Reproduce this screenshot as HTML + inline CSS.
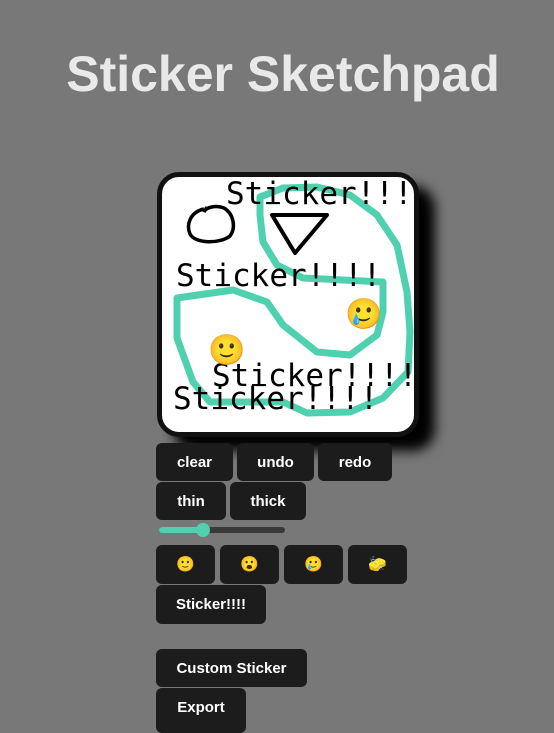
<!DOCTYPE html>
<html><head><style>
body{margin:0;background:#787878;width:554px;height:725px;overflow:hidden;position:relative;font-family:"Liberation Sans",sans-serif}
h1{position:absolute;left:0;width:566px;top:45px;margin:0;text-align:center;font-size:50px;font-weight:bold;color:#e9e9e9}
#cv{position:absolute;left:157px;top:172px;width:252px;height:255px;border:5px solid #111;border-radius:22px;background:#fff;overflow:hidden;box-shadow:16px 14px 12px #000}
#cv svg{position:absolute;left:-162px;top:-177px}
.b{position:absolute;background:#1c1c1c;color:#fff;border-radius:6px;height:38px;line-height:40px;text-align:center;font-size:15px;font-weight:bold}
.s{position:absolute;left:159px;top:527px;width:126px;height:6px;border-radius:3px;background:#3a3a3a}
.s i{position:absolute;left:0;top:0;width:44px;height:6px;background:#4fd1b0;border-radius:3px}
.s b{position:absolute;left:37px;top:-4px;width:14px;height:14px;border-radius:50%;background:#4fd1b0}
</style></head><body>
<h1>Sticker Sketchpad</h1>
<div id="cv"><svg width="554" height="725" viewBox="0 0 554 725">
<path d="M260,197 L283,188 L317,187 L350,195 L377,215 L397,245 L407,292 L410,332 L408,372 L383,398 L350,412 L307,413 L283,402 L210,402 L193,382 L177,338 L177,298 L233,290 L267,302 L283,325 L317,352 L350,355 L377,335 L383,312 L383,282 L343,280 L303,278 L277,265 L263,242 L260,215 Z" fill="none" stroke="#4fd1b0" stroke-width="7" stroke-linejoin="round"/>
<path d="M204,209 C190,212 186,225 190,234 C195,244 220,244 230,236 C236,228 234,214 224,208 C216,205 206,207 204,212 L207,207" fill="none" stroke="#000" stroke-width="3.5"/>
<path d="M272,215 L327,215 L295,253 Z" fill="none" stroke="#000" stroke-width="4" stroke-linejoin="round"/>
<g font-family="DejaVu Sans Mono,monospace" font-size="31" fill="#000">
<text x="226" y="204">Sticker!!!</text>
<text x="176" y="286">Sticker!!!!</text>
<text x="212" y="386">Sticker!!!!</text>
<text x="173" y="409">Sticker!!!!</text>
</g>
<text x="345" y="324" font-size="30" font-family="Noto Color Emoji,sans-serif">🥲</text>
<text x="208" y="360" font-size="30" font-family="Noto Color Emoji,sans-serif">🙂</text>
</svg></div>
<div class="b" style="left:156px;top:443px;width:77px">clear</div>
<div class="b" style="left:237px;top:443px;width:77px">undo</div>
<div class="b" style="left:318px;top:443px;width:74px">redo</div>
<div class="b" style="left:156px;top:482px;width:70px">thin</div>
<div class="b" style="left:230px;top:482px;width:76px">thick</div>
<div class="s"><i></i><b></b></div>
<div class="b" style="left:156px;top:545px;width:59px;height:39px">🙂</div>
<div class="b" style="left:220px;top:545px;width:59px;height:39px">😮</div>
<div class="b" style="left:284px;top:545px;width:59px;height:39px">🥲</div>
<div class="b" style="left:348px;top:545px;width:59px;height:39px">🧽</div>
<div class="b" style="left:156px;top:585px;width:110px;height:39px">Sticker!!!!</div>
<div class="b" style="left:156px;top:649px;width:151px">Custom Sticker</div>
<div class="b" style="left:156px;top:688px;width:90px;height:45px">Export</div>
</body></html>
